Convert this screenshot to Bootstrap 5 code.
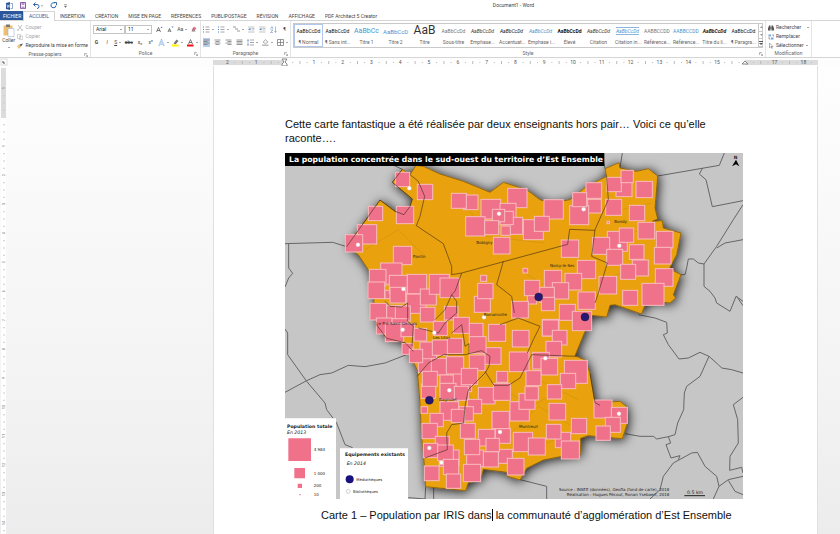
<!DOCTYPE html>
<html lang="fr">
<head>
<meta charset="utf-8">
<meta name="viewport" content="width=device-width, initial-scale=1">
<title>Document1 - Word</title>
<link href="https://cdn.jsdelivr.net/npm/bootstrap@5.3.0/dist/css/bootstrap.min.css" rel="stylesheet">
<style>
body{font-family:Roboto,"Open Sans",sans-serif;font-size:5px;line-height:7px;color:#444;background:#fff;height:100vh;overflow:hidden}
button,select{font:inherit;color:inherit;background:none;border:0;padding:0;line-height:7px;text-align:left}
svg{display:block;flex:none}
.titlebar{height:11px}
.quick{gap:7px;padding:0 6px}
.doc-title{padding-top:2px;padding-left:114px}
.tabs{height:10px;border-bottom:1px solid #d5d5d5}
.tabs a{color:#444;text-decoration:none;line-height:10px;padding:0 5px;white-space:nowrap}
.tabs a.file-tab{background:#2b579a;color:#fff;padding:0 3px;width:23px}
.tabs a.current{color:#2b579a;background:#fff;border:1px solid #d5d5d5;border-bottom:0;line-height:9px;height:10px}
.ribbon{height:37px;border-bottom:1px solid #d5d5d5}
.rgroup{border-right:1px solid #e4e4e4;padding:2px 2px 0}
.rlabel{margin-top:auto;text-align:center;color:#666;position:relative;line-height:7px}
.rlabel svg{position:absolute;right:0;top:2px}
.dim{color:#a5a5a5}
.cmd{display:flex;align-items:center;gap:2px;white-space:nowrap;height:9px}
.combo{border:1px solid #c6c6c6;height:9px;appearance:none;padding:0 2px;color:#222}
.combo-box{position:relative}
.combo-box::after,.arr::after{content:"";width:0;height:0;border:1px solid transparent;border-top:1px solid #555;display:inline-block}
.combo-box::after{position:absolute;right:3px;top:4px}
.tool-row{display:flex;align-items:center;justify-content:space-between;height:13px}
.tool{display:flex;align-items:center;justify-content:center;min-width:7px;height:9px;gap:2px}
.tool.on{background:#b9cdee}
.gallery{border:1px solid #c9c9c9;height:25px}
.style-card{width:29px;height:23px;text-align:center;white-space:nowrap;padding:0 2px}
.style-card.chosen{outline:1px solid #b3c7ea;outline-offset:-1px}
.sample{display:block;height:13px;line-height:15px;font-size:5px;color:#333}
.caption-s{display:block;line-height:10px;color:#666}
.sample.blue{color:#4a93cf}
.sample.big{font-size:7px}
.sample.mid{font-size:6px}
.sample.huge{font-size:12px;line-height:13px}
.sample.grey{color:#777}
.sample.dark{color:#111}
.ruled{text-decoration:underline overline 1px #8db5e0}
.scrolls{width:7px}
.scrolls button{flex:1;border-left:1px solid #c9c9c9;border-bottom:1px solid #c9c9c9;display:flex;align-items:center;justify-content:center}
.hruler{background:#fdfdfd}
.canvas-area{background:linear-gradient(#fefefe,#fafafa 25%,#f2f2f2 75%,#ececec);min-height:0}
.page-sheet{width:605px;margin-left:206px;padding:51px 71px 0;background:#fff;border-left:1px solid #e0e0e0;border-right:1px solid #e0e0e0;font-family:"Liberation Sans",Arial,sans-serif;font-size:11px;line-height:14px;color:#111}
.map{width:458px;margin-top:8px}
.map-caption{padding:9px 0 0 36px;white-space:nowrap;margin:0}
.caret{display:inline-block;width:1px;height:12px;background:#000;vertical-align:-2px}
.map text{font-family:"DejaVu Sans",Verdana,sans-serif;fill:#222}
.map text.map-title{fill:#fff}
#g-clip{width:91px}
#paste{width:18px;margin-right:2px;margin-top:1px}
#g-font{width:110px}
#ff{width:32px}
#fs{width:27px}
#g-para{width:90px}
#g-style{width:475px}
#g-edit{width:46px}
</style>
</head>
<body class="d-flex flex-column">
<header>
  <div class="titlebar d-flex">
    <div class="quick d-flex align-items-center">
      <svg width="7" height="8" viewBox="0 0 14 16"><path fill="#2b579a" d="M0 2l8-2v16l-8-2z"/><path d="M9 3h4v10H9" fill="#fff" stroke="#2b579a"/><path d="M2 5l1 6 1.500-5 1.500 5 1-6" fill="none" stroke="#fff"/></svg>
      <button type="button" aria-label="Enregistrer"><svg width="6" height="7" viewBox="0 0 12 14"><path d="M1 1h10v12H1z" fill="#fff" stroke="#8a5aa5" stroke-width="2"/><path d="M3 2h6v4H3zM3 9h6v4H3z" fill="#b891cc"/></svg></button>
      <button type="button" aria-label="Annuler"><svg width="10" height="7" viewBox="0 0 20 14"><path d="M5 1L1 5l4 4M1 5h7q4 0 4 4t-4 4" fill="none" stroke="#2f66ad" stroke-width="2"/><path d="M16 7h4l-2 2z" fill="#555"/></svg></button>
      <button type="button" aria-label="Répéter"><svg width="7" height="7" viewBox="0 0 14 14"><path d="M9 2a5 5 0 1 0 3 5M8 1h5v5" fill="none" stroke="#2f66ad" stroke-width="2"/></svg></button>
      <button type="button" aria-label="Personnaliser"><svg width="3" height="4" viewBox="0 0 6 8"><path d="M0 1h6M1 4h4L3 7z" fill="#666" stroke="#666"/></svg></button>
    </div>
    <div class="flex-grow-1 text-center doc-title">Document1 - Word</div>
  </div>
  <nav class="tabs d-flex">
    <a href="#" class="file-tab">FICHIER</a><a href="#" class="current">ACCUEIL</a><a href="#">INSERTION</a><a href="#">CRÉATION</a><a href="#">MISE EN PAGE</a><a href="#">RÉFÉRENCES</a><a href="#">PUBLIPOSTAGE</a><a href="#">RÉVISION</a><a href="#">AFFICHAGE</a><a href="#">PDF Architect 5 Creator</a>
  </nav>
  <div class="ribbon d-flex">
    <section class="rgroup d-flex flex-column" id="g-clip">
      <div class="d-flex">
        <button type="button" class="text-center" id="paste"><svg width="12" height="13" viewBox="0 0 24 26" class="mx-auto"><path d="M1 3h18v20H1z" fill="#eebf72"/><path d="M6 1h8v5H6z" fill="#777"/><path d="M10 9h12v16H10z" fill="#fff" stroke="#8da9cf"/></svg>Coller<br><span class="arr"></span></button>
        <div>
          <button type="button" class="cmd dim"><svg width="6" height="6" viewBox="0 0 12 12"><path d="M2 0l7 9M10 0L3 9" stroke="#aaa" stroke-width="1.500"/><circle cx="2" cy="10" r="1.500" fill="none" stroke="#aaa"/><circle cx="10" cy="10" r="1.500" fill="none" stroke="#aaa"/></svg>Couper</button>
          <button type="button" class="cmd dim"><svg width="6" height="6" viewBox="0 0 12 12"><path d="M1 1h6v8H1zM5 4h6v7H5z" fill="#fff" stroke="#aaa"/></svg>Copier</button>
          <button type="button" class="cmd"><svg width="6" height="6" viewBox="0 0 12 12"><path d="M0 6l5-3 3 4-4 5z" fill="#eebf72"/><path d="M5 3l3 4 4-6z" fill="#555"/></svg>Reproduire la mise en forme</button>
        </div>
      </div>
      <div class="rlabel">Presse-papiers<svg width="4" height="4" viewBox="0 0 8 8"><path d="M1 6V1h5M3 3l4 4M7 4v3H4" fill="none" stroke="#777"/></svg></div>
    </section>
    <section class="rgroup d-flex flex-column" id="g-font">
      <div class="tool-row">
        <div class="d-flex"><div class="combo-box"><select class="combo" id="ff" aria-label="Police"><option>Arial</option></select></div><div class="combo-box"><select class="combo" id="fs" aria-label="Taille"><option>11</option></select></div></div>
        <button type="button" class="tool" aria-label="Agrandir"><svg width="7" height="7" viewBox="0 0 14 14"><path d="M1 12L5 3l4 9M2 9h6" fill="none" stroke="#555" stroke-width="1.500"/><path d="M9 4h4l-2-3z" fill="#4a7fc0"/></svg></button>
        <button type="button" class="tool" aria-label="Réduire"><svg width="7" height="7" viewBox="0 0 14 14"><path d="M2 12l3-7 3 7M3 10h4" fill="none" stroke="#555" stroke-width="1.500"/><path d="M9 1h4l-2 3z" fill="#4a7fc0"/></svg></button>
        <button type="button" class="tool arr">Aa</button>
        <button type="button" class="tool" aria-label="Effacer"><svg width="6" height="7" viewBox="0 0 12 14"><path d="M1 8l6-7 4 4-6 7z" fill="#e87d96"/><path d="M2 12l3-9 3 9" fill="none" stroke="#666"/></svg></button>
      </div>
      <div class="tool-row">
        <button type="button" class="tool fw-bold">G</button><button type="button" class="tool fst-italic">I</button><button type="button" class="tool text-decoration-underline arr">S</button><button type="button" class="tool text-decoration-line-through">abc</button><button type="button" class="tool">x₂</button><button type="button" class="tool">x²</button>
        <button type="button" class="tool arr" aria-label="Effets"><svg width="7" height="8" viewBox="0 0 14 16"><path d="M2 14L7 2l5 12M4 10h6" fill="none" stroke="#8db5e0" stroke-width="3"/><path d="M2 14L7 2l5 12M4 10h6" fill="none" stroke="#fff"/></svg></button>
        <button type="button" class="tool arr" aria-label="Surlignage"><svg width="7" height="8" viewBox="0 0 14 16"><path d="M3 9l6-8 4 3-6 7z" fill="#777"/><path d="M0 11h13v4H0z" fill="#fff200"/></svg></button>
        <button type="button" class="tool arr" aria-label="Couleur de police"><svg width="7" height="8" viewBox="0 0 14 16"><path d="M3 10L7 1l4 9M4 7h6" fill="none" stroke="#555" stroke-width="1.500"/><path d="M0 11h13v4H0z" fill="#f01010"/></svg></button>
      </div>
      <div class="rlabel">Police<svg width="4" height="4" viewBox="0 0 8 8"><path d="M1 6V1h5M3 3l4 4M7 4v3H4" fill="none" stroke="#777"/></svg></div>
    </section>
    <section class="rgroup d-flex flex-column" id="g-para">
      <div class="tool-row" id="para1"></div>
      <div class="tool-row" id="para2"></div>
      <div class="rlabel">Paragraphe<svg width="4" height="4" viewBox="0 0 8 8"><path d="M1 6V1h5M3 3l4 4M7 4v3H4" fill="none" stroke="#777"/></svg></div>
    </section>
    <section class="rgroup d-flex flex-column" id="g-style">
      <div class="gallery d-flex"><div class="d-flex" id="gallery"></div>
        <div class="scrolls d-flex flex-column"><button type="button" aria-label="Haut"><svg width="3" height="2" viewBox="0 0 6 4"><path d="M0 4h6L3 0z" fill="#999"/></svg></button><button type="button" aria-label="Bas"><svg width="3" height="2" viewBox="0 0 6 4"><path d="M0 0h6L3 4z" fill="#999"/></svg></button><button type="button" aria-label="Autres"><svg width="4" height="4" viewBox="0 0 8 8"><path d="M0 0h8v2H0zM0 4h8L4 8z" fill="#555"/></svg></button></div></div>
      <div class="rlabel">Style<svg width="4" height="4" viewBox="0 0 8 8"><path d="M1 6V1h5M3 3l4 4M7 4v3H4" fill="none" stroke="#777"/></svg></div>
    </section>
    <section class="rgroup d-flex flex-column" id="g-edit">
      <button type="button" class="cmd"><svg width="6" height="6" viewBox="0 0 12 12"><path d="M2 1h3v4h2V1h3l2 6v4H7V7H5v4H0V7z" fill="#555"/></svg>Rechercher<span class="arr ms-1"></span></button>
      <button type="button" class="cmd"><svg width="6" height="6" viewBox="0 0 12 12"><path d="M1 1h5v4H1zM6 7h5v4H6z" fill="#7aa5d8"/><path d="M2 6v4h3M8 2h3v3" stroke="#555" fill="none"/></svg>Remplacer</button>
      <button type="button" class="cmd"><svg width="6" height="6" viewBox="0 0 12 12"><path d="M3 0v10l3-3 2 4 1-1-2-3h3z" fill="#fff" stroke="#666"/></svg>Sélectionner<span class="arr"></span></button>
      <div class="rlabel">Modification</div>
    </section>
  </div>
  <svg class="hruler" id="hruler" width="840" height="8" viewBox="0 0 840 8"></svg>
</header>
<main class="canvas-area flex-grow-1 d-flex overflow-hidden">
  <svg id="vruler" width="7" height="468" viewBox="0 0 7 468"></svg>
  <article class="page-sheet">
    <p class="m-0">Cette carte fantastique a été réalisée par deux enseignants hors pair… Voici ce qu’elle<br>raconte….</p>
    <svg class="map" viewBox="0 0 1374 1038" role="img" aria-label="Carte de la population d'Est Ensemble">
      <defs><filter id="shade" x="-10%" y="-10%" width="120%" height="120%"><feDropShadow dx="4" dy="4" stdDeviation="16" flood-color="#000" flood-opacity=".9"/></filter></defs>
      <rect width="1374" height="1038" fill="#c6c6c6"/>
      <g fill="none" stroke="#666" stroke-width="3">
        <path d="M0 272L143 268 185 281M11 272V345L23 361 11 375 0 402M322 35L352 49"/>
        <path d="M0 528L8 540V605L65 685 120 750 125 770 155 810 180 875 203 884M0 718L65 683 105 665 140 660 190 637 240 641 300 630 385 597"/>
        <path d="M960 47L955 20M1005 45L1012 0M1118 69L1303 37 1318 0M1253 45L1243 63 1263 80 1282 161 1374 143M1374 155L1345 200 1295 280 1257 333 1240 330 1225 318 1210 318 1205 345 1200 365 1188 365M1374 260L1320 270 1295 285M1257 333V400L1275 415 1290 435 1295 450 1335 475 1353 430 1374 445M1355 430L1374 458"/>
        <path d="M1060 485L1110 495 1145 508 1147 540 1135 545 1150 575 1182 618 1210 615 1245 598 1272 610 1300 635 1310 645 1340 650 1374 660M1272 610L1245 670 1205 700 1198 720 1196 770 1178 810 1170 845 1150 851 1115 858 1105 850 1065 850 1020 842M1150 851L1157 870 1143 875 1158 915 1185 908 1180 920M1374 733L1345 755 1358 800 1360 870 1335 910 1334 952 1370 943 1374 960M1095 1038L1125 1010 1135 970 1165 930 1220 900 1237 898 1260 940 1295 970 1302 1000 1330 980 1374 970M1302 1000L1285 1038M1330 982L1350 1015 1374 1025"/>
        <path d="M705 980L785 1000V1038M422 1001L420 1038M446 1004V1038M310 995L325 998M370 1034L422 1038"/>
      </g>
      <path filter="url(#shade)" stroke="#7a5200" stroke-width="2" fill="#e9a10f" d="M352 49L322 88 382 138 375 160 357 185 330 175 285 141 185 281 220 305 253 355 265 415 268 465 275 516 305 556 360 569 375 606 397 651 405 751 410 851 417 921 422 1001 542 1013 550 989 587 981 595 949 675 959 665 969 705 981 725 946 775 921 825 911 887 904V856L910 848 1012 857 1027 811 1025 761 1005 745 975 747 945 757 930 749 915 661 900 621 870 608 920 487 965 492 975 457 990 455 1070 483 1080 455 1110 445 1155 450 1172 435 1165 425 1188 365 1153 347 1175 305 1188 240 1135 225 1132 203 1102 205 1118 198 1110 165 1118 69 1090 47 1055 55 1005 45 1002 29 960 47 965 70 905 100 855 140 795 150 765 140 725 110 655 88 615 118 535 85 465 63 415 40 393 37 375 65Z"/>
      <path fill="none" stroke="#d3920f" stroke-width="2" d="M240 290L340 230 420 310M300 420L420 380 480 420M500 130L560 180 600 250 780 270M960 180L1100 150M930 260L1080 230 1160 300M960 380L1080 330M720 360L850 440M640 700L740 760 860 690M660 860L760 760 880 830M700 900L840 850M430 750L520 700 590 760M760 680L880 740"/>
      <g id="squares" fill="#f0728a" stroke="#f9bcc0" stroke-width="3"></g>
      <g fill="none" stroke="#3c2a12" stroke-opacity=".6" stroke-width="3">
        <path d="M375 65L400 85 419 130 405 190 394 218 475 272 500 340V365L530 360 848 274 854 229 930 232M655 325L635 395 680 430 688 480M530 360L510 415 500 425 515 445V480L480 510 460 540 400 525M500 425L480 470 450 500M965 70L970 140 930 230 920 310 967 330 940 420 930 450M352 49L322 88 382 138 375 160 357 185 330 175 285 141 185 281M300 445L315 460 350 462 368 450V505L385 520 381 580"/>
        <path d="M397 670L430 630 475 605H540L590 593 615 610 612 640 600 660 550 710 540 760 536 810 500 815 485 840 487 890 420 915M500 540L530 515 540 580 552 572V603M600 655L627 697H670L705 675 740 605 875 610M645 515L700 495 765 520 745 560 727 600M945 757L930 749 915 661M275 516L305 556 360 569 385 595"/>
      </g>
      <g id="dots"></g>
      <g font-size="12"><text x="384" y="315">Pantin</text><text x="574" y="274">Bobigny</text><text x="988" y="211">Bondy</text><text x="795" y="343">Noisy-le-Sec</text><text x="596" y="489">Romainville</text><text x="274" y="515">Le Pré-Saint-Gervais</text><text x="444" y="558">Les Lilas</text><text x="462" y="745">Bagnolet</text><text x="702" y="825">Montreuil</text></g>
      <rect width="958" height="39"/>
      <text x="12" y="28" font-size="23" font-weight="bold" class="map-title">La population concentrée dans le sud-ouest du territoire d’Est Ensemble</text>
      <text x="1346" y="19" font-size="13" font-weight="bold">N</text><path d="M1353 20l10 20-10-6-12 6z"/>
      <path fill="#fff" d="M0 796H153V1038H0zM165 886H369V1038H165z"/>
      <path fill="#f0728a" d="M10 856H78V924H10zM28 945H60V976H28zM38 992H51V1005H38zM43 1023h4v4h-4z"/>
      <text x="6" y="824" font-size="14" font-weight="bold">Population totale</text><text x="6" y="842" font-size="14" font-style="italic">En 2013</text>
      <g font-size="12"><text x="86" y="895">4 984</text><text x="86" y="965">1 000</text><text x="86" y="1003">200</text><text x="86" y="1029">10</text></g>
      <text x="180" y="909" font-size="14" font-weight="bold">Equipements existants</text><text x="185" y="936" font-size="14" font-style="italic">En 2014</text>
      <circle cx="194" cy="979" r="12" fill="#17127d"/><text x="214" y="983" font-size="11">Médiathèques</text>
      <circle cx="190" cy="1015" r="6" fill="#fff" stroke="#bbb" stroke-width="2"/><text x="204" y="1019" font-size="11">Bibliothèques</text>
      <g font-size="12" text-anchor="end"><text x="1153" y="1015">Source : INSEE (données), Geofla (fond de carte), 2018</text><text x="1153" y="1029">Réalisation : Hugues Pécout, Ronan Ysebaert, 2018</text></g>
      <text x="1206" y="1022" font-size="14">0.5 km</text><path d="M1198 1028H1260" stroke="#222" stroke-width="3"/>
    </svg>
    <p class="map-caption">Carte 1 – Population par IRIS dans<span class="caret"></span> la communauté d’agglomération d’Est Ensemble</p>
  </article>
</main>
<script src="https://cdn.jsdelivr.net/npm/bootstrap@5.3.0/dist/js/bootstrap.bundle.min.js"></script>
<script>
// Population squares: origin of each sector, then x, y, side
const sectors=[
[-15,-15,"346,73,43 412,109,46 265,175,43 349,175,52 232,230,58 196,260,52 550,141,44 514,136,45 603,154,59 683,121,58 660,166,48 677,208,51 660,190,40 637,184,37 557,206,58 614,218,42 663,234,28 640,268,50 340,295,55 302,345,64 268,364,50 264,402,50 315,427,25 328,382,54 380,438,58 382,379,58 330,418,47 421,423,48 448,379,60 480,390,59 602,382,18 583,445,48 593,406,46 421,478,44 493,475,41 270,466,50 320,472,50 346,474,45 289,510,48 336,512,48 520,508,48"],
[675,-15,"102,155,58 40,215,60 73,205,45 228,104,47 233,154,41 179,173,57 188,134,42 318,98,48 291,88,43 333,67,37 378,100,49 287,154,48 358,172,46 384,223,50 292,250,60 328,240,43 248,268,51 290,304,48 358,290,44 439,250,50 433,298,50 367,336,48 332,349,45 436,362,53 396,406,66 338,427,45 267,385,53 154,276,52 291,220,7 202,337,55 103,367,52 165,376,50 127,404,49 88,418,45 52,440,28 43,397,46 94,448,40 39,361,14 204,432,52 148,469,48 187,490,58 97,514,50 5,460,50"],
[-15,501,"316,10,55 363,10,40 366,70,33 402,25,38 415,108,50 420,66,50 388,88,40 460,4,42 568,10,41 626,13,51 697,31,50 457,60,46 502,55,46 613,83,50 568,50,50 688,96,59 454,115,50 480,165,50 520,160,55 499,110,52 568,105,47 424,192,43 427,154,45 480,190,48 544,145,49 523,199,42 650,154,33 595,202,50 640,190,51 562,238,43 480,245,56 537,260,43 514,268,40 423,260,20 450,280,40 426,310,46 541,310,45 595,328,50 646,325,45 636,274,52 690,245,58 655,388,42 609,395,46 560,390,50 553,358,46 618,355,40 682,415,50 466,349,42 430,370,43 490,390,47 473,375,47 478,425,14 490,418,46 433,438,44 499,462,43 550,433,52"],
[675,501,"97,0,48 127,31,44 108,64,47 68,97,50 93,115,50 163,121,69 151,160,46 48,152,45 112,194,43 27,220,48 45,200,40 117,250,50 10,337,58 55,354,51 136,337,46 109,313,44 154,363,54 184,295,46 252,240,54 304,262,48 286,292,45 258,318,43"]];
document.getElementById('squares').innerHTML=sectors.map(([ox,oy,s])=>s.split(' ').map(t=>{const[x,y,w]=t.split(',').map(Number);return `<rect x="${x+ox}" y="${y+oy}" width="${w}" height="${w}"/>`}).join('')).join('');
const libraries=[[373,106],[219,275],[642,182],[355,408],[597,493],[896,169],[1003,278],[353,530],[448,539],[493,712],[645,837],[433,885],[469,929],[781,616],[1002,782]];
const media=[[761,432],[900,492],[433,742]];
document.getElementById('dots').innerHTML=libraries.map(([x,y])=>`<circle cx="${x}" cy="${y}" r="6" fill="#fff" stroke="#ccc" stroke-width="1"/>`).join('')+media.map(([x,y])=>`<circle cx="${x}" cy="${y}" r="12" fill="#241872" stroke="#111" stroke-width="1"/>`).join('');

// Rulers, 28.8 px per centimetre
const cm=28.8;let h='<rect x="213" y="2" width="72" height="5" fill="#dcdcdc"/><rect x="285" y="2" width="460" height="5" fill="#fff"/><rect x="745" y="2" width="73" height="5" fill="#dcdcdc"/><rect x="1" y="1" width="6" height="6" fill="#fff" stroke="#ddd"/><path d="M3 3v2h2" stroke="#555" fill="none"/>';
for(let i=-2;i<=18;i++){const x=285+i*cm;if(i&&i!==16)h+=`<text x="${x}" y="6" font-size="5" text-anchor="middle" fill="#555">${Math.abs(i)}</text>`;
 for(const q of[.25,.5,.75])if(x+q*cm<817)h+=`<rect x="${x+q*cm}" y="${q===.5?3:4}" width="1" height="${q===.5?3:1}" fill="#bbb"/>`}
h+='<path d="M282 1h5l-2 3 2 2v2h-5V6l2-2zM742 6l3-3 3 3z" fill="#fff" stroke="#888"/>';
document.getElementById('hruler').innerHTML=h;
let v='<rect x="1" y="2" width="5" height="50" fill="#dcdcdc"/><rect x="1" y="52" width="5" height="416" fill="#fff"/>';
for(let i=-1;i<=14;i++){const y=51+i*29;if(i)v+=`<text transform="translate(5 ${y}) rotate(-90)" font-size="4" text-anchor="middle" fill="#777">${Math.abs(i)}</text>`;
 for(const q of[.25,.5,.75])v+=`<rect x="3" y="${y+q*29}" width="2" height="1" fill="#ccc"/>`}
document.getElementById('vruler').innerHTML=v;

// Styles gallery: label, classes, sample text
const styles=[['¶ Normal','dark'],['¶ Sans int...','dark'],['Titre 1','blue big','AaBbCc'],['Titre 2','blue mid','AaBbCcD'],['Titre','huge','AaB'],['Sous-titre','grey'],['Emphase...','fst-italic'],['Accentuat...','fst-italic dark'],['Emphase i...','fst-italic blue'],['Élevé','fw-bold dark'],['Citation','fst-italic'],['Citation in...','fst-italic blue ruled'],['Référence...','grey','AABBCCDD'],['Référence...','blue','AABBCCDD'],['Titre du li...','fst-italic fw-bold dark'],['¶ Paragra...','dark']];
document.getElementById('gallery').innerHTML=styles.map(([n,c='',t='AaBbCcDd'],i)=>`<button type="button" class="style-card${i?'':' chosen'}"><span class="sample ${c}">${t}</span><span class="caption-s">${n}</span></button>`).join('');

// Paragraph tools
const ln=d=>`<svg width="7" height="7" viewBox="0 0 14 14"><path d="${d}" fill="none" stroke="#777" stroke-width="1.500"/></svg>`;
const list='<svg width="7" height="7" viewBox="0 0 14 14"><path d="M5 2h8M5 7h8M5 12h8" stroke="#888" stroke-width="1.500"/><path d="M0 1h2v2H0zM0 6h2v2H0zM0 11h2v2H0z" fill="#4a7fc0"/></svg>';
const ind='<svg width="7" height="7" viewBox="0 0 14 14"><path d="M0 2h13M7 5h6M7 8h6M0 12h13" stroke="#888"/><path d="M5 4v5L0 6.500z" fill="#4a7fc0"/></svg>';
const b=(l,c,s)=>`<button type="button" class="tool ${c}" aria-label="${l}">${s}</button>`;
document.getElementById('para1').innerHTML=b('Puces','arr',list)+b('Numérotation','arr',list)+b('Niveaux','arr',ln('M0 2h6M4 6h6M8 10h6'))+b('Diminuer le retrait','',ind)+b('Augmenter le retrait','',ind)+b('Trier','','<svg width="7" height="7" viewBox="0 0 14 14"><path d="M1 6l3-5 2 5M1 8h5L1 13h5" fill="none" stroke="#4a7fc0"/><path d="M11 1v11M9 10l2 3 2-3" fill="none" stroke="#777"/></svg>')+b('Marques','','¶');
document.getElementById('para2').innerHTML=b('Gauche','on',ln('M1 2h12M1 5h8M1 8h12M1 11h8'))+b('Centrer','',ln('M1 2h12M3 5h8M1 8h12M3 11h8'))+b('Droite','',ln('M1 2h12M5 5h8M1 8h12M5 11h8'))+b('Justifier','',ln('M1 2h12M1 5h12M1 8h12M1 11h12'))+b('Interligne','arr','<svg width="7" height="7" viewBox="0 0 14 14"><path d="M6 2h8M6 7h8M6 12h8" stroke="#888" stroke-width="1.500"/><path d="M2 1v12M0 4l2-3 2 3M0 10l2 3 2-3" fill="none" stroke="#4a7fc0"/></svg>')+b('Trame','arr','<svg width="7" height="7" viewBox="0 0 14 14"><path d="M2 6l5-5 5 5-5 4z" fill="#eee" stroke="#777"/><path d="M0 11h13v3H0z" fill="#bbb"/></svg>')+b('Bordures','arr',ln('M1 1h12v12H1zM7 1v12M1 7h12'));
</script>
</body>
</html>
